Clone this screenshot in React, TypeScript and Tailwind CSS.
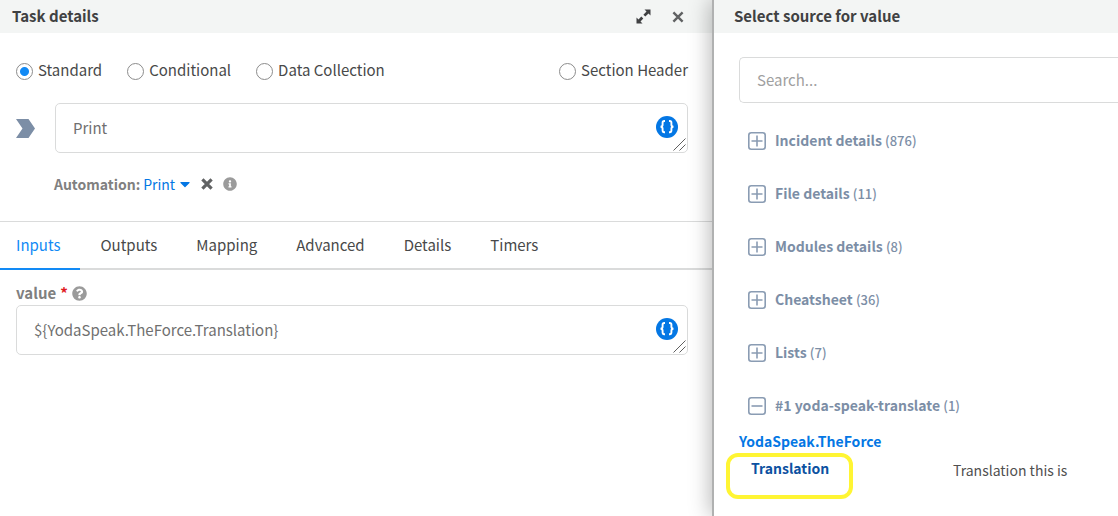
import type { ReactNode } from "react";
import { useState } from "react";
import { FaCaretDown, FaInfoCircle, FaQuestionCircle } from "react-icons/fa";

const taskTypes = ["Standard", "Conditional", "Data Collection", "Section Header"];
const tabs = ["Inputs", "Outputs", "Mapping", "Advanced", "Details", "Timers"];
const sources = [
  { name: "Incident details", count: 876, open: false },
  { name: "File details", count: 11, open: false },
  { name: "Modules details", count: 8, open: false },
  { name: "Cheatsheet", count: 36, open: false },
  { name: "Lists", count: 7, open: false },
  { name: "#1 yoda-speak-translate", count: 1, open: true },
];

function ExpandIcon() {
  return (
    <svg width="15" height="15" viewBox="0 0 15 15" fill="#404142" aria-hidden="true">
      <path d="M8.5 0.5H14.5V6.5L12.5 4.6L9.3 7.6L7.4 5.7L10.5 2.5Z" />
      <path d="M6.5 14.5H0.5V8.5L2.5 10.4L5.3 7.6L7.3 9.5L4.5 12.5Z" />
    </svg>
  );
}

function CrossIcon({ size, width }: { size: number; width: number }) {
  return (
    <svg width={size} height={size} viewBox="0 0 12 12" stroke="currentColor" strokeWidth={width} aria-hidden="true">
      <path d="M1.4 1.4L10.6 10.6M10.6 1.4L1.4 10.6" />
    </svg>
  );
}

function BracesIcon() {
  return (
    <svg width="22" height="22" viewBox="0 0 22 22" fill="none" aria-hidden="true">
      <circle cx="11" cy="11" r="11" fill="#0477e4" />
      <path
        d="M9 5H8.2Q6.6 5 6.6 6.6V8.8Q6.6 10.6 4.6 10.8Q6.6 11 6.6 12.8V14.6Q6.6 16.2 8.2 16.2H9M13 5H13.8Q15.4 5 15.4 6.6V8.8Q15.4 10.6 17.4 10.8Q15.4 11 15.4 12.8V14.6Q15.4 16.2 13.8 16.2H13"
        stroke="#fff"
        strokeWidth="1.9"
      />
    </svg>
  );
}

function ToggleIcon({ open }: { open: boolean }) {
  return (
    <svg width="18" height="18" viewBox="0 0 18 18" fill="none" stroke="#8a9cb3" strokeWidth="1.6" aria-hidden="true">
      <rect x="0.8" y="0.8" width="16.4" height="16.4" rx="2.5" />
      <path d={open ? "M3.5 9H14.5" : "M3.5 9H14.5M9 3.5V14.5"} />
    </svg>
  );
}

function ValueBox({ id, label, value }: { id: string; label: string; value: string }) {
  const [text, setText] = useState(value);
  return (
    <div className="relative grow">
      <textarea
        id={id}
        aria-label={label}
        rows={1}
        value={text}
        onChange={(e) => setText(e.target.value)}
        className="block w-full resize-none overflow-hidden rounded-[5px] border border-[#dadbdb] bg-white py-3 pr-12 pl-[17px] text-[15px] leading-6 text-[#707070] outline-none"
      />
      <button type="button" aria-label="Select source" className="absolute top-[13px] right-2.5">
        <BracesIcon />
      </button>
      <svg className="pointer-events-none absolute right-0.5 bottom-0.5" width="13" height="13" viewBox="0 0 13 13" stroke="#606060" aria-hidden="true">
        <path d="M0.5 12.5L12.5 0.5M6.5 12.5L12.5 6.5" />
      </svg>
    </div>
  );
}

function PanelHeader({ title, children }: { title: string; children?: ReactNode }) {
  return (
    <header className="flex h-[33px] items-center justify-between bg-[#f3f5f4]">
      <h2 className="pb-0.5 text-[15px] leading-5 font-bold text-[#404142]">{title}</h2>
      {children}
    </header>
  );
}

export default function App() {
  const [type, setType] = useState("Standard");
  const [tab, setTab] = useState("Inputs");
  return (
    <div className="grid min-h-screen grid-cols-[712fr_406fr] overflow-hidden bg-white font-['Noto_Sans_CJK_SC',sans-serif] text-[15px] leading-6 text-[#484949]">
      <main className="min-w-0">
        <div className="bg-[#f3f5f4] pr-7 pl-3">
          <PanelHeader title="Task details">
            <div className="flex items-center gap-[21px]">
              <button type="button" aria-label="Expand">
                <ExpandIcon />
              </button>
              <button type="button" aria-label="Close" className="text-[#606263]">
                <CrossIcon size={12} width={2.4} />
              </button>
            </div>
          </PanelHeader>
        </div>

        <div className="pr-6 pl-4">
          <div role="radiogroup" aria-label="Task type" className="flex gap-[25px] pt-[25px]">
            {taskTypes.map((t) => (
              <label key={t} className="flex items-center gap-[5px] last:ml-auto">
                <input
                  type="radio"
                  name="task-type"
                  checked={type === t}
                  onChange={() => setType(t)}
                  className="mt-[3px] size-[17px] appearance-none rounded-full border border-[#8c8c8c] bg-white checked:bg-[radial-gradient(circle,#128af5_4px,white_5px)]"
                />
                {t}
              </label>
            ))}
          </div>

          <div className="flex items-center gap-5 pt-[21px]">
            <svg width="19" height="19" viewBox="0 0 19 19" fill="#7c8ea6" aria-hidden="true">
              <path d="M0 0H12.5L19 9.5L12.5 19H0L6.5 9.5Z" />
            </svg>
            <ValueBox id="task-name" label="Task name" value="Print" />
          </div>

          <div className="flex items-center pt-[19px] pl-[38px] text-sm leading-6">
            <span className="font-bold text-[#808080]">Automation:</span>
            <button type="button" className="ml-[3px] flex items-center gap-0.5 text-[#0477e4]">
              Print
              <FaCaretDown size={16} />
            </button>
            <button type="button" aria-label="Remove automation" className="ml-2 text-[#606263]">
              <CrossIcon size={12} width={3.2} />
            </button>
            <FaInfoCircle size={14} className="ml-2.5 text-[#9b9b9b]" />
          </div>
        </div>

        <div role="tablist" className="mt-[25px] flex border-t border-b-2 border-[#dadbdb]">
          {tabs.map((t) => (
            <button
              key={t}
              type="button"
              role="tab"
              aria-selected={tab === t}
              onClick={() => setTab(t)}
              className="-mb-0.5 border-b-2 border-transparent py-[11px] pr-[19px] pl-5 first:pr-5 first:pl-4 aria-selected:border-[#128af5] aria-selected:text-[#128af5]"
            >
              {t}
            </button>
          ))}
        </div>

        <div className="pt-[11px] pr-6 pl-4">
          <div className="flex items-center gap-1 font-bold text-[#808080]">
            <label htmlFor="value">value</label>
            <span className="text-[#e01a22]">*</span>
            <FaQuestionCircle size={15} className="text-[#9b9b9b]" />
          </div>
          <ValueBox id="value" label="value" value="${YodaSpeak.TheForce.Translation}" />
        </div>
      </main>

      <aside className="z-10 min-w-0 border-l-2 border-[#b0b1b1] bg-white shadow-[-2px_0_20px_rgba(0,0,0,0.28)]">
        <div className="bg-[#f3f5f4] pl-5">
          <PanelHeader title="Select source for value" />
        </div>
        <div className="pt-6 pl-[25px]">
          <input
            type="search"
            aria-label="Search"
            placeholder="Search..."
            className="block h-[46px] w-full rounded-l-[5px] border border-r-0 border-[#dadbdb] pb-0.5 pl-[17px] outline-none placeholder:text-[#a0a0a0]"
          />
          <ul className="pt-[11px] pl-[9px] text-[#7c8ea6]">
            {sources.map((s) => (
              <li key={s.name}>
                <button type="button" aria-expanded={s.open} className="flex h-[53px] items-center gap-[9px]">
                  <ToggleIcon open={s.open} />
                  <span className="text-sm leading-6 font-bold">
                    {s.name} <span className="text-[13px] font-medium">({s.count})</span>
                  </span>
                </button>
              </li>
            ))}
          </ul>
          <a href="#theforce" className="-mt-[3px] block text-sm leading-6 font-bold text-[#0477e4]">
            YodaSpeak.TheForce
          </a>
          <div className="-ml-[13px] flex">
            <a
              href="#translation"
              className="h-[46px] w-[127px] rounded-xl border-4 border-[#fff533] pl-[21px] text-sm leading-[22px] font-bold text-[#0c51a1]"
            >
              Translation
            </a>
            <span className="ml-[100px] pt-[5px] text-sm leading-6 text-[#505050]">Translation this is</span>
          </div>
        </div>
      </aside>
    </div>
  );
}
